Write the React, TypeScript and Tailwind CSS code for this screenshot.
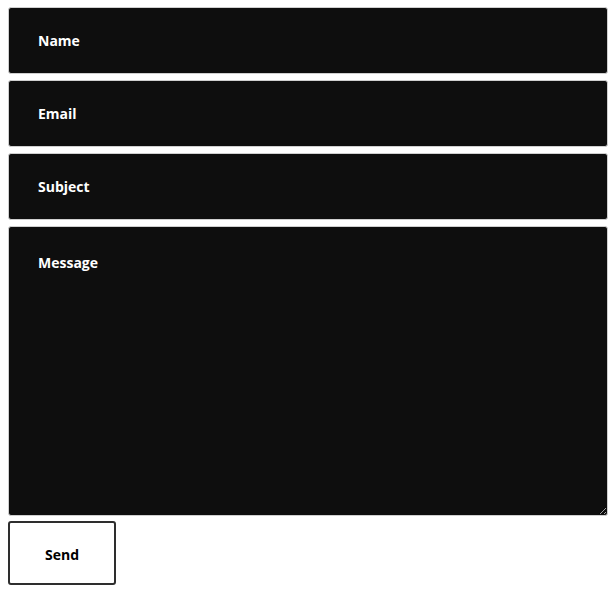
import React from "react";

const FIELDS = ["Name", "Email", "Subject"];

export default function App() {
  return (
    <div className="min-h-[593px] bg-white px-2 pt-[7px] font-['Open_Sans',sans-serif]">
      <form className="flex flex-col w-[600px]" onSubmit={(e) => e.preventDefault()}>
        <div className="flex flex-col gap-[6px]">
          {FIELDS.map((label) => (
            <input
              key={label}
              type="text"
              placeholder={label}
              className="h-[67px] w-full rounded-[3px] border border-[#cfcfcf] bg-[#0e0e0e] px-[29px] text-[14px] font-bold text-white placeholder:text-white outline-none"
            />
          ))}
          <textarea
            placeholder="Message"
            className="block h-[290px] w-full rounded-[3px] border border-[#cfcfcf] bg-[#0e0e0e] px-[29px] pt-[25px] text-[14px] font-bold text-white placeholder:text-white outline-none"
          />
        </div>
        <button
          type="submit"
          className="mt-[5px] h-[64px] w-[108px] rounded-[3px] border-2 border-[#2e2e2e] bg-white pt-[3px] text-[14px] font-bold text-black"
        >
          Send
        </button>
      </form>
    </div>
  );
}
